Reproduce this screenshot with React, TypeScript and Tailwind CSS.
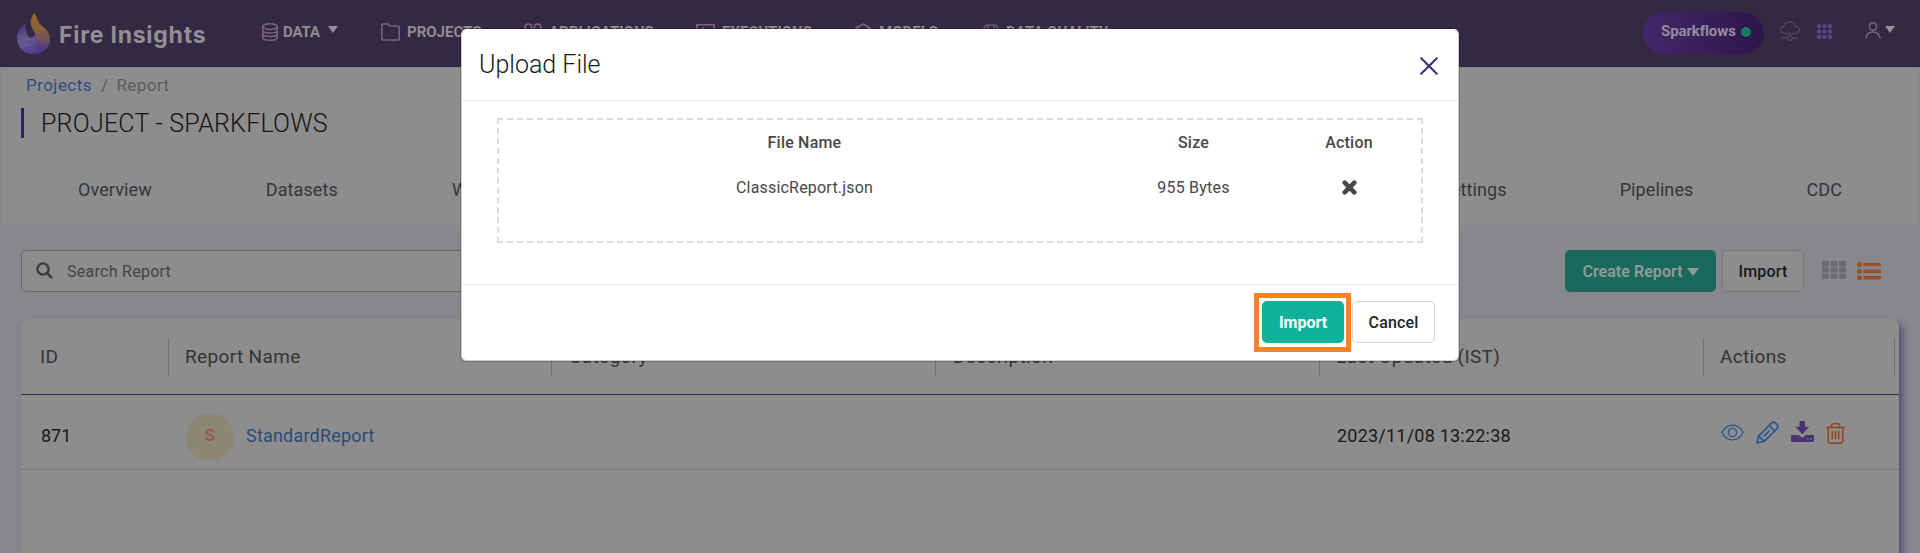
import React from 'react';

const navText = 'whitespace-nowrap text-[15px] font-bold leading-5 text-[#8f8c93]';

function Flame() {
  return (
    <svg width="33" height="42" viewBox="0 0 33 42" className="shrink-0">
      <defs>
        <linearGradient id="fl-a" x1="0" y1="0" x2="0" y2="1">
          <stop offset="0" stopColor="#906a2c" />
          <stop offset="0.4" stopColor="#86603c" />
          <stop offset="0.7" stopColor="#6c4d62" />
          <stop offset="0.85" stopColor="#523a82" />
          <stop offset="1" stopColor="#4f3a8c" />
        </linearGradient>
        <linearGradient id="fl-b" x1="0" y1="0" x2="0.4" y2="1">
          <stop offset="0" stopColor="#3d2f86" />
          <stop offset="0.55" stopColor="#625988" />
          <stop offset="1" stopColor="#564494" />
        </linearGradient>
      </defs>
      <path d="M17 0C21 4 19 7 24 12C29 16 33 19 33 26C33 35 26 41 17 41C13 36 20 28 18 20C14 14 11 8 17 0Z" fill="url(#fl-a)" />
      <path d="M9 11C8 16 9 21 12 24C14 25.500 17 25 18 21C22 28 21 36 15 41C6 40.500 0 34 0 25C0 18 4 13 9 11Z" fill="url(#fl-b)" />
      <path d="M1 22C6 27 12 27 17 25M3 33C9 34 16 31 19 27" stroke="#7d769c" strokeWidth="0.9" fill="none" opacity="0.5" />
    </svg>
  );
}

const stroke = { fill: 'none', stroke: '#7d6286', strokeWidth: 1.5 } as const;

const DbIcon = () => (
  <svg width="16" height="18" viewBox="0 0 16 18" {...stroke}>
    <ellipse cx="8" cy="3.6" rx="7.2" ry="2.8" />
    <path d="M.8 3.6v10.8c0 1.6 3.2 2.8 7.2 2.8s7.2-1.2 7.2-2.8V3.6M.8 7.2C.8 8.800 4 10 8 10s7.200-1.200 7.200-2.800M.8 10.800c0 1.600 3.200 2.800 7.200 2.800s7.200-1.200 7.200-2.800" />
  </svg>
);
const FolderIcon = () => (
  <svg width="19" height="18" viewBox="0 0 19 18" {...stroke}>
    <path d="M.8 16V2c0-.7.4-1 1-1h5.400l1.600 2h8.400c.6 0 1 .4 1 1v12c0 .7-.4 1-1 1H1.800c-.6 0-1-.3-1-1z" />
  </svg>
);
const AppsIcon = () => (
  <svg width="18" height="18" viewBox="0 0 18 18" {...stroke}>
    <circle cx="4.400" cy="4.400" r="3.300" />
    <circle cx="13.600" cy="4.400" r="3.300" />
    <circle cx="4.400" cy="13.600" r="3.300" />
    <circle cx="13.600" cy="13.600" r="3.300" />
  </svg>
);
const ExecIcon = () => (
  <svg width="19" height="16" viewBox="0 0 19 16" {...stroke}>
    <path d="M.8.800h17.400v14.400H.8zM8 3.600L4.500 6.500l3.500 3" />
  </svg>
);
const CubeIcon = () => (
  <svg width="16" height="18" viewBox="0 0 16 18" {...stroke}>
    <path d="M8 1l7 4v8l-7 4-7-4V5zM1 5l7 4 7-4M8 9v8" />
  </svg>
);
const GemIcon = () => (
  <svg width="18" height="17" viewBox="0 0 18 17" {...stroke} strokeWidth={1.2}>
    <path d="M4 1h10l3 5-8 10L1 6zM1 6h16M6.500 1L5.500 6 9 16l3.500-10-1-5" />
  </svg>
);
const Caret = ({ className }: { className: string }) => (
  <svg viewBox="0 0 10 7" preserveAspectRatio="none" className={className}>
    <path d="M0 0h10L5 7z" fill="currentColor" />
  </svg>
);

const nav = [
  { label: 'DATA', Icon: DbIcon, w: 'w-[119px]', box: 'w-[21px]', tw: 'tracking-[-0.1px]', caret: true },
  { label: 'PROJECTS', Icon: FolderIcon, w: 'w-[143px]', box: 'w-[26px]', tw: '', caret: false },
  { label: 'APPLICATIONS', Icon: AppsIcon, w: 'w-[172px]', box: 'w-[25px]', tw: '', caret: false },
  { label: 'EXECUTIONS', Icon: ExecIcon, w: 'w-[159px]', box: 'w-[26px]', tw: '', caret: false },
  { label: 'MODELS', Icon: CubeIcon, w: 'w-[127px]', box: 'w-[24px]', tw: '', caret: false },
  { label: 'DATA QUALITY', Icon: GemIcon, w: 'w-[140px]', box: 'w-[24px]', tw: '', caret: false },
];

function Header() {
  return (
    <header className="flex h-[67px] shrink-0 items-start bg-[#342943]">
      <div className="flex w-[262px] pl-[17px] pt-[13px]">
        <Flame />
        <span className="ml-[9px] mt-[6px] whitespace-nowrap font-[Inter] text-[23px] font-bold leading-8 tracking-[0.75px] text-[#918f94]">Fire Insights</span>
      </div>
      <nav className="flex pt-[22px]">
        {nav.map(({ label, Icon, w, box, tw, caret }) => (
          <div key={label} className={`flex h-5 items-center ${w}`}>
            <span className={`flex shrink-0 ${box}`}><Icon /></span>
            <span className={`${navText} ${tw}`}>{label}</span>
            {caret && <Caret className="mb-[5px] ml-2 h-[7px] w-[10px] text-[#918f94]" />}
          </div>
        ))}
      </nav>
      <div className="ml-auto flex pr-[25px] pt-3">
        <div className="flex h-[42px] w-[121px] items-center rounded-full bg-linear-to-r from-[#44276a] to-[#2e1549] pb-1 pl-[18px]">
          <span className="whitespace-nowrap text-[15px] font-bold tracking-[-0.1px] text-[#938c9c]">Sparkflows</span>
          <span className="ml-[5px] mt-[2px] h-[10px] w-[10px] rounded-full bg-[#1b7a64]" />
        </div>
        <svg className="ml-4 mt-[9px]" width="20" height="21" viewBox="0 0 20 21" fill="none" stroke="#4d4359" strokeWidth="1.500">
          <path d="M5 12.500C2.500 12.500.8 11 .8 8.800.8 7 2 5.700 3.800 5.400 4.500 2.600 7 .9 9.800.9c2.900 0 5.200 1.700 5.900 4.400 2.100.2 3.500 1.700 3.500 3.500 0 2.200-1.700 3.700-4.200 3.700zM10 12.500v3M2 17.200h5.500M12.500 17.200H18" />
          <circle cx="10" cy="17.200" r="2.200" />
        </svg>
        <svg className="ml-[17px] mt-3" width="15" height="15" viewBox="0 0 15 15" fill="#574586">
          {[2.1, 7.5, 12.9].map((y) => [2.1, 7.5, 12.9].map((x) => <circle key={`${x}-${y}`} cx={x} cy={y} r="2.200" />))}
        </svg>
        <svg className="ml-[33px] mt-[10px]" width="16" height="17" viewBox="0 0 16 17" fill="none" stroke="#7d6286" strokeWidth="1.500">
          <ellipse cx="8" cy="4.600" rx="3.600" ry="3.900" />
          <path d="M.8 16.500C1.500 12.200 4.200 9.900 8 9.900s6.500 2.300 7.200 6.600" />
        </svg>
        <Caret className="ml-[4px] mt-[14px] h-[7px] w-[10px] text-[#918f94]" />
      </div>
    </header>
  );
}

const btn = 'flex h-[42px] items-center justify-center whitespace-nowrap rounded-[5px] text-[16px]';

function ActionIcons() {
  return (
    <div className="flex items-center">
      <svg className="mt-[-1px]" width="23" height="17" viewBox="0 0 23 17" fill="none" stroke="#2f5793" strokeWidth="1.400">
        <path d="M.8 8.500C3.400 3.600 7 1.100 11.500 1.100s8.100 2.500 10.700 7.400c-2.600 4.900-6.200 7.400-10.700 7.400S3.400 13.400.8 8.500z" />
        <circle cx="11.500" cy="8.500" r="4.100" />
      </svg>
      <svg className="ml-3 mt-[-1px]" width="23" height="23" viewBox="0 0 23 23" fill="none" stroke="#2b5596" strokeWidth="1.700" strokeLinejoin="round">
        <path d="M1 22l1.700-7.200L15.200 2.300c1.500-1.500 3-1.500 4.300-.2l1.400 1.400c1.300 1.300 1.300 2.800-.2 4.300L8.200 20.300zM13 4.500l5.500 5.500M2.700 14.800l5.500 5.500M8 15.200l5.500-5.500" />
      </svg>
      <svg className="ml-3 mt-[-3px]" width="23" height="21" viewBox="0 0 23 21" fill="#4a3472">
        <path d="M8.500 0h5.500v5.800h4.200l-6.900 7.400-6.900-7.400h4.100z" />
        <path fillRule="evenodd" d="M1.200 14h6.600l3.500 3 3.500-3h7c.7 0 1.200.5 1.200 1.200v4.600c0 .7-.5 1.200-1.200 1.200H1.200C.5 21 0 20.500 0 19.800v-4.600C0 14.500.5 14 1.200 14zM16 17.200v1.400h1.500v-1.400zM19.500 17.200v1.400H21v-1.400z" />
      </svg>
      <svg className="ml-3" width="19" height="21" viewBox="0 0 19 21" fill="none" stroke="#98411d" strokeWidth="1.500">
        <path d="M0 4.400h19M5.500 4.400V2.500c0-1 .6-1.700 1.600-1.700h4.800c1 0 1.600.7 1.600 1.700v1.900M2.200 4.400v13.400c0 1.500.9 2.400 2.400 2.400h9.800c1.500 0 2.400-.9 2.400-2.400V4.400M6.300 7.800v8.400M9.500 7.800v8.400M12.700 7.800v8.400" />
      </svg>
    </div>
  );
}

const columns = [
  { label: 'ID', w: 'w-[148px] pl-[19px]' },
  { label: 'Report Name', w: 'w-[383px] pl-[16px]' },
  { label: 'Category', w: 'w-[384px] pl-[17px]' },
  { label: 'Description', w: 'w-[384px] pl-[17px]' },
  { label: 'Last Updated (IST)', w: 'w-[384px] pl-[16px]' },
  { label: 'Actions', w: 'w-[191px] pl-[16px]' },
];

function UploadDialog() {
  return (
    <div role="dialog" className="absolute left-[461px] top-[29px] flex h-[332px] w-[998px] flex-col rounded-[5px] border border-[#cfcfd2] border-t-white bg-white bg-clip-padding shadow-[0_0_0_1px_rgba(0,0,0,0.18)]">
      <div className="flex h-[71px] items-start justify-between border-b border-[#e6eaee] pl-[17px] pr-[20px]">
        <h2 className="mt-[17px] text-[25px] font-[350] leading-9 text-[#181818]">Upload File</h2>
        <svg className="mt-[27px]" width="18" height="18" viewBox="0 0 18 18" stroke="#3b2a82" strokeWidth="2" strokeLinecap="round">
          <path d="M1.200 1.200l15.600 15.600M16.800 1.200L1.200 16.800" />
        </svg>
      </div>
      <div className="h-[184px] border-b border-[#e9e9e9] px-[35px] pt-[17px]">
        <div className="grid h-[125px] grid-cols-[611px_167px_144px] content-start border-2 border-dashed border-[#dcdcdc] pt-[11px] text-center text-[16px] leading-6 text-[#474747]">
          <span className="font-medium tracking-[0.2px]">File Name</span>
          <span className="font-medium tracking-[0.2px]">Size</span>
          <span className="font-medium tracking-[0.2px]">Action</span>
          <span className="mt-[21px] tracking-[0.2px]">ClassicReport.json</span>
          <span className="mt-[21px] tracking-[0.2px]">955 Bytes</span>
          <span className="mt-[20px] flex items-center justify-center">
            <svg width="15" height="15" viewBox="0 0 15 15" stroke="#474747" strokeWidth="4.600" strokeLinecap="round">
              <path d="M2.700 2.700l9.600 9.600M12.300 2.700l-9.600 9.600" />
            </svg>
          </span>
        </div>
      </div>
      <div className="flex items-start justify-end pr-[23px] pt-[8px]">
        <div className="h-[59px] w-[97px] border-[5px] border-[#ff8127] pl-[3px] pt-[3px]">
          <div className={`${btn} w-[82px] bg-[#10b19a] pt-px font-bold text-white`}>Import</div>
        </div>
        <div className={`${btn} ml-px mt-2 w-[83px] border border-[#ced4da] bg-white pt-px font-medium tracking-[0.15px] text-[#212529]`}>Cancel</div>
      </div>
    </div>
  );
}

export default function App() {
  return (
    <div className="relative flex h-[553px] w-[1920px] flex-col overflow-hidden bg-[#88878c] font-[Roboto,sans-serif]">
      <Header />
      <section className="ml-[3px] mr-[2px] mt-[2px] h-[156px] shrink-0 bg-[#8d8d8d]">
        <div className="flex h-8 items-center pl-[23px] pt-[2px] text-[17px] tracking-[0.45px] text-[#595c60]">
          <span className="text-[#2b4f80]">Projects</span>
          <span className="ml-[9px]">/</span>
          <span className="ml-[8px]">Report</span>
        </div>
        <div className="ml-[18px] mt-[7px] flex h-[30px] items-center border-l-[3px] border-[#2f2060] pl-[17px]">
          <h1 className="mt-[2px] whitespace-nowrap text-[25px] font-[350] leading-8 tracking-[0.23px] text-[#131313]">PROJECT - SPARKFLOWS</h1>
        </div>
        <div className="mt-[38px] flex justify-between pl-[75px] pr-[76px] text-[18px] leading-7 tracking-[0.1px] text-[#33363a]">
          <div className="flex gap-[114px]">
            <span>Overview</span>
            <span>Datasets</span>
            <span>Workflows</span>
          </div>
          <div className="flex gap-[113px]">
            <span>Settings</span>
            <span>Pipelines</span>
            <span>CDC</span>
          </div>
        </div>
      </section>
      <div className="mt-[25px] flex h-[42px] shrink-0 items-center pl-[21px]">
        <div className="flex h-[42px] w-[600px] items-center rounded-[5px] border border-[#68686b] bg-[#8d8d8d] pl-[14px]">
          <svg width="17" height="17" viewBox="0 0 17 17" fill="none" stroke="#3d3d3e" className="mb-[2px]">
            <circle cx="7" cy="7" r="5.600" strokeWidth="2.400" />
            <path d="M11.200 11.200l4 4" strokeWidth="2.700" strokeLinecap="round" />
          </svg>
          <span className="ml-[14px] mt-px text-[16px] tracking-[0.27px] text-[#414345]">Search Report</span>
        </div>
        <div className={`${btn} ml-auto w-[151px] bg-[#19695d] pt-px font-semibold tracking-[0.05px] text-[#929a98]`}>
          Create Report
          <Caret className="ml-[4px] h-2 w-3" />
        </div>
        <div className={`${btn} ml-[6px] w-[82px] border border-[#737679] bg-[#8d8d8d] pt-px font-medium tracking-[0.2px] text-[#18191b]`}>Import</div>
        <svg className="ml-[18px] mb-[2px]" width="24" height="18" viewBox="0 0 24 18" fill="#6b6b6d">
          {[0, 6.2, 12.400].map((y) => [0, 8.500, 17].map((x) => <rect key={`${x}-${y}`} x={x} y={y} width="7" height="5.400" rx="1" />))}
        </svg>
        <svg className="ml-[11px] mr-[39px]" width="24" height="19" viewBox="0 0 24 19" fill="#97502c">
          {[2.600, 9.200, 15.800].map((y) => (
            <g key={y}>
              <circle cx="2.500" cy={y} r="2.500" />
              <rect x="6.500" y={y - 1.700} width="17.300" height="3.400" rx="0.500" />
            </g>
          ))}
        </svg>
      </div>
      <main className="ml-[21px] mr-[21px] mt-[27px] h-[280px] rounded-t-[8px] bg-[#8d8d8d] shadow-[4px_4px_6px_#575178]">
        <div className="flex h-[76px] items-center border-b border-[#36286a]">
          {columns.map(({ label, w }) => (
            <div key={label} className={`flex h-[37px] items-center whitespace-nowrap border-r border-[#6f6f71] pt-[2px] text-[19px] tracking-[0.35px] text-[#333436] ${w}`}>{label}</div>
          ))}
        </div>
        <div className="flex h-[75px] items-center border-b border-[#7b7b7c] text-[18px] text-[#18191a]">
          <div className="mt-[7px] w-[144px] pl-[20px]">871</div>
          <div className="flex w-[1152px] items-center pl-[21px] pt-[9px]">
            <span className="flex h-12 w-12 items-center justify-center rounded-full bg-[#8e8674] pb-0.5 text-[17px] font-bold text-[#925f47]">S</span>
            <span className="mb-[2px] ml-[12px] tracking-[0.2px] text-[#2b4b7a]">StandardReport</span>
          </div>
          <div className="mt-[7px] w-[404px] pl-[20px] tracking-[0.22px]">2023/11/08 13:22:38</div>
          <div className="mt-[2px]"><ActionIcons /></div>
        </div>
      </main>
      <UploadDialog />
    </div>
  );
}
